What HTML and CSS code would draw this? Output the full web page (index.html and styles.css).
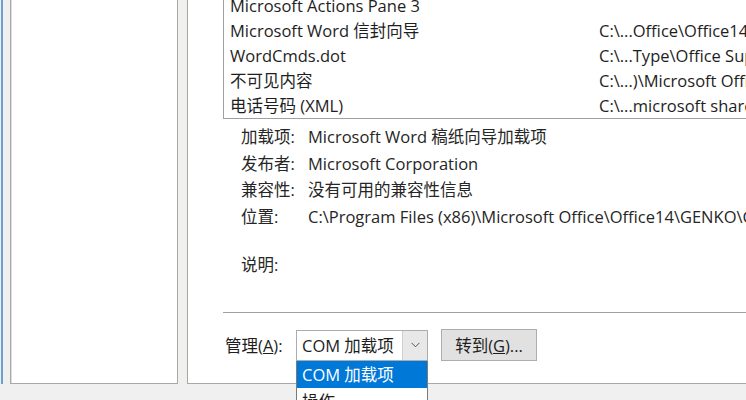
FILE: index.html
```html
<!DOCTYPE html>
<html lang="zh-CN">
<head>
  <meta charset="UTF-8">
  <title>加载项</title>
  <link rel="stylesheet" href="styles.css">
</head>
<body>
  <div class="window">
    <div class="side"></div>
    <div class="main">
      <div class="addin-list">
        <div class="row"><span class="name">Microsoft Actions Pane 3</span><span class="path"></span></div>
        <div class="row"><span class="name">Microsoft Word 信封向导</span><span class="path">C:\...Office\Office14\ADDINS\CENVELOP.DLL</span></div>
        <div class="row"><span class="name">WordCmds.dot</span><span class="path">C:\...Type\Office Support\WordCmds.dot</span></div>
        <div class="row"><span class="name">不可见内容</span><span class="path">C:\...)\Microsoft Office\Office14\OFFRHD.DLL</span></div>
        <div class="row"><span class="name">电话号码 (XML)</span><span class="path">C:\...microsoft shared\Smart Tag\MOFL.DLL</span></div>
      </div>

      <div class="details">
        <div class="detail"><span class="label">加载项:</span><span class="value">Microsoft Word 稿纸向导加载项</span></div>
        <div class="detail"><span class="label">发布者:</span><span class="value">Microsoft Corporation</span></div>
        <div class="detail"><span class="label">兼容性:</span><span class="value">没有可用的兼容性信息</span></div>
        <div class="detail"><span class="label">位置:</span><span class="value">C:\Program Files (x86)\Microsoft Office\Office14\GENKO\GENKO.DLL</span></div>
        <div class="detail note"><span class="label">说明:</span><span class="value"></span></div>
      </div>

      <div class="separator"></div>

      <div class="manage">
        <span class="manage-label">管理(<u>A</u>):</span>
        <div class="combo">
          <span class="combo-value">COM 加载项</span>
          <span class="combo-arrow">
            <svg width="9" height="6" viewBox="0 0 9 6"><path d="M0.5 0.8 L4.5 4.8 L8.5 0.8" fill="none" stroke="#555" stroke-width="1"/></svg>
          </span>
          <ul class="combo-menu">
            <li class="selected">COM 加载项</li>
            <li>操作</li>
          </ul>
        </div>
        <button type="button" class="go">转到(<u>G</u>)...</button>
      </div>
    </div>
  </div>
</body>
</html>
```

FILE: styles.css
```css
html, body {
  margin: 0;
  height: 400px;
  overflow: hidden;
  background: #f0f0f0;
}
body {
  padding-left: 1px;
  font-family: "Open Sans", "Noto Sans CJK SC", sans-serif;
  font-size: 16.5px;
  color: #1e1e1e;
}
.window {
  display: flex;
  gap: 9px;
  height: 414px;
  margin-top: -30px;
  padding-left: 7px;
  border-left: 2px solid #6c9fd2;
  box-sizing: border-box;
  width: 900px;
}
.side {
  flex: 0 0 166px;
  background: #fff;
  border: 1px solid #aba7a2;
  box-shadow: inset 1px 0 #ddd;
}
.main {
  flex: 1;
  min-width: 0;
  background: #fff;
  border: 1px solid #aba7a2;
  padding: 21px 0 0 35px;
}
.addin-list {
  border: 1px solid #a0a0a0;
  border-right: none;
  border-top: none;
  margin-top: 1px;
}
.row {
  display: flex;
  height: 25px;
  line-height: 25px;
  padding-left: 6px;
  white-space: nowrap;
}
.row .name {
  flex: 0 0 369px;
}
.details {
  padding: 5px 0 0 18px;
}
.detail {
  display: flex;
  height: 26.5px;
  line-height: 26.5px;
  white-space: nowrap;
  color: #262626;
}
.detail .label {
  flex: 0 0 67px;
}
.detail.note {
  margin-top: 21.5px;
}
.separator {
  margin-top: 34px;
  border-top: 1px solid #a0a0a0;
}
.manage {
  display: flex;
  align-items: center;
  margin-top: 16px;
  padding-left: 2px;
}
.manage-label {
  width: 71px;
}
.combo {
  position: relative;
  display: flex;
  border: 1px solid #acacac;
  box-sizing: border-box;
  width: 132px;
  height: 31px;
}
.combo-value {
  flex: 1;
  padding-left: 5px;
  line-height: 29px;
  white-space: nowrap;
}
.combo-arrow {
  width: 24px;
  display: flex;
  align-items: center;
  justify-content: center;
  background: #e8e8e8;
  border-left: 1px solid #d0d0d0;
}
.combo-menu {
  position: absolute;
  top: 30px;
  left: -1px;
  width: 132px;
  margin: 0;
  padding: 0;
  list-style: none;
  background: #fff;
  border: 1px solid #7a7a7a;
  border-top: none;
  box-sizing: border-box;
}
.combo-menu li {
  height: 27px;
  line-height: 27px;
  padding-left: 5px;
  white-space: nowrap;
}
.combo-menu li.selected {
  background: #0078d7;
  color: #fff;
}
.go {
  width: 96px;
  height: 32px;
  margin-left: 13px;
  padding: 0;
  font: inherit;
  color: #1e1e1e;
  background: #e1e1e1;
  border: 1px solid #adadad;
}
```
